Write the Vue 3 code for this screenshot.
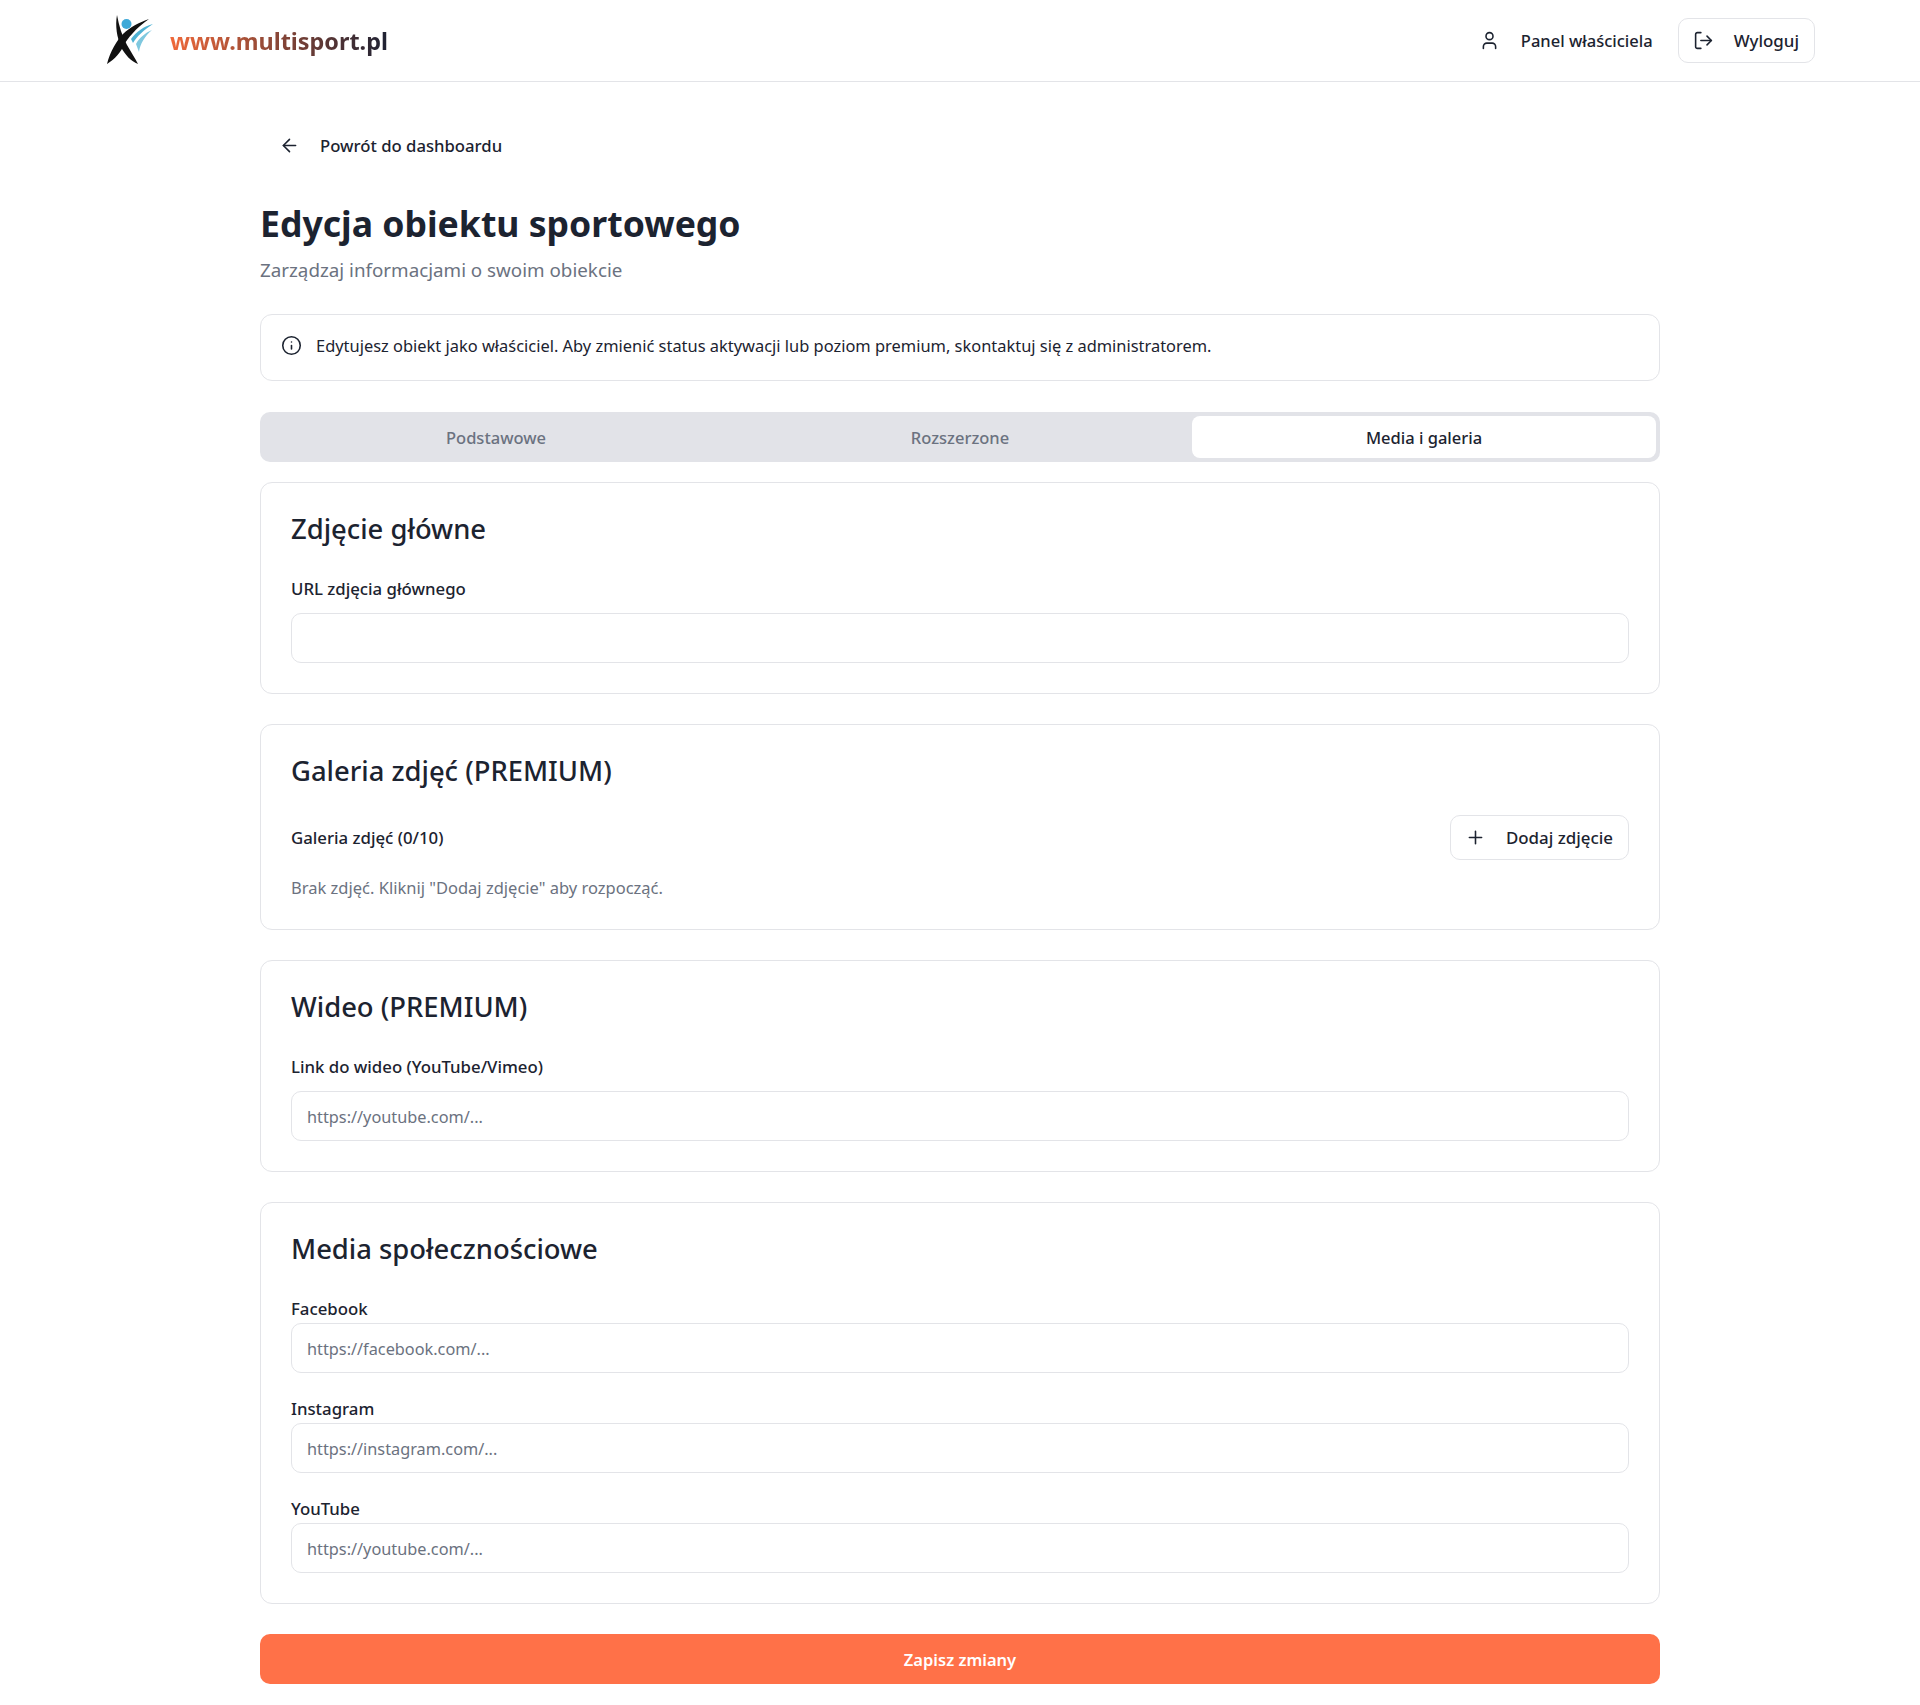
<script setup>
const tabs = [
  { name: 'Podstawowe', active: false },
  { name: 'Rozszerzone', active: false },
  { name: 'Media i galeria', active: true },
]

const socials = [
  { label: 'Facebook', placeholder: 'https://facebook.com/...' },
  { label: 'Instagram', placeholder: 'https://instagram.com/...' },
  { label: 'YouTube', placeholder: 'https://youtube.com/...' },
]
</script>

<template>
  <div class="page">
    <header class="topbar">
      <a class="brand">
        <svg class="logo" viewBox="0 0 46 50" width="46" height="50">
          <path d="M10 0 C12 11 15 21 20 30 C24 37 28 43 31 49 C24 46 18 40 14 32 C10 22 8 11 10 0 Z" fill="#111" />
          <path d="M42 4 C33 7 23 12 16 19 C10 25 3 37 0 49 C8 44 14 37 17 30 C20 24 29 13 42 4 Z" fill="#111" />
          <circle cx="19.5" cy="9" r="5" fill="#3ea9d8" />
          <path d="M46 9 C37 11 29 17 24 24 L26 28 C30 21 37 15 46 9 Z" fill="#4fb2d4" />
          <path d="M45 15 C38 18 32 23 29 29 L32 37 C33 29 38 21 45 15 Z" fill="#7fc8df" />
        </svg>
        <span class="brand-name">www.multisport.pl</span>
      </a>
      <nav class="top-actions">
        <a class="owner">
          <svg class="icon" viewBox="0 0 24 24"><path d="M19 21v-2a4 4 0 0 0-4-4H9a4 4 0 0 0-4 4v2" /><circle cx="12" cy="7" r="4" /></svg>
          Panel właściciela
        </a>
        <button class="outline-btn" type="button">
          <svg class="icon" viewBox="0 0 24 24"><path d="M9 21H5a2 2 0 0 1-2-2V5a2 2 0 0 1 2-2h4" /><path d="m16 17 5-5-5-5" /><path d="M21 12H9" /></svg>
          Wyloguj
        </button>
      </nav>
    </header>

    <main class="content">
      <a class="back">
        <svg class="icon" viewBox="0 0 24 24"><path d="m12 19-7-7 7-7" /><path d="M19 12H5" /></svg>
        Powrót do dashboardu
      </a>

      <h1>Edycja obiektu sportowego</h1>
      <p class="subtitle">Zarządzaj informacjami o swoim obiekcie</p>

      <div class="notice">
        <svg class="icon" viewBox="0 0 24 24"><circle cx="12" cy="12" r="10" /><path d="M12 16v-4" /><path d="M12 8h.01" /></svg>
        <span>Edytujesz obiekt jako właściciel. Aby zmienić status aktywacji lub poziom premium, skontaktuj się z administratorem.</span>
      </div>

      <div class="tabs">
        <button
          v-for="tab in tabs"
          :key="tab.name"
          type="button"
          :class="['tab', { active: tab.active }]"
        >
          {{ tab.name }}
        </button>
      </div>

      <section class="card">
        <h2>Zdjęcie główne</h2>
        <label class="label">URL zdjęcia głównego</label>
        <input class="field" type="text" />
      </section>

      <section class="card">
        <h2>Galeria zdjęć (PREMIUM)</h2>
        <div class="gallery-row">
          <label class="label">Galeria zdjęć (0/10)</label>
          <button class="outline-btn" type="button">
            <svg class="icon" viewBox="0 0 24 24"><path d="M5 12h14" /><path d="M12 5v14" /></svg>
            Dodaj zdjęcie
          </button>
        </div>
        <p class="hint">Brak zdjęć. Kliknij "Dodaj zdjęcie" aby rozpocząć.</p>
      </section>

      <section class="card">
        <h2>Wideo (PREMIUM)</h2>
        <label class="label">Link do wideo (YouTube/Vimeo)</label>
        <input class="field" type="text" placeholder="https://youtube.com/..." />
      </section>

      <section class="card">
        <h2>Media społecznościowe</h2>
        <div class="socials">
          <div v-for="item in socials" :key="item.label" class="social">
            <label class="label">{{ item.label }}</label>
            <input class="field" type="text" :placeholder="item.placeholder" />
          </div>
        </div>
      </section>

      <button class="save" type="button">Zapisz zmiany</button>
    </main>
  </div>
</template>

<style scoped>
.page {
  min-height: 1705px;
  background: #fff;
  color: #1c2330;
  font-family: "Noto Sans", "Open Sans", sans-serif;
  font-size: 16.5px;
}

.topbar {
  display: flex;
  align-items: center;
  justify-content: space-between;
  height: 81px;
  padding: 0 105px 0 107px;
  border-bottom: 1px solid #e3e4e8;
}

.brand {
  display: flex;
  align-items: center;
  gap: 17px;
}

.logo {
  display: block;
  margin-top: -2px;
}

.brand-name {
  font-size: 23.4px;
  font-weight: 700;
  background: linear-gradient(90deg, #f0693a, #1e2233);
  -webkit-background-clip: text;
  background-clip: text;
  color: transparent;
}

.top-actions {
  display: flex;
  align-items: center;
  gap: 8px;
}

.owner {
  display: flex;
  align-items: center;
  gap: 21px;
  padding: 0 17px;
  font-weight: 500;
}

.icon {
  width: 21px;
  height: 21px;
  flex: none;
  fill: none;
  stroke: currentColor;
  stroke-width: 1.8;
  stroke-linecap: round;
  stroke-linejoin: round;
}

.outline-btn {
  display: flex;
  align-items: center;
  gap: 20px;
  height: 45px;
  padding: 0 15px 0 14px;
  background: #fff;
  border: 1px solid #e3e4e8;
  border-radius: 10px;
  color: inherit;
  font: inherit;
  font-size: 16.9px;
  font-weight: 500;
}

.content {
  width: 1400px;
  margin: 0 auto;
  padding-top: 41px;
}

.back {
  display: flex;
  align-items: center;
  gap: 20px;
  height: 45px;
  padding-left: 19px;
  font-size: 16.7px;
  font-weight: 500;
}

h1 {
  margin: 31px 0 0;
  font-size: 35.6px;
  line-height: 48px;
  font-weight: 700;
  color: #1c2330;
}

.subtitle {
  margin: 10px 0 0;
  font-size: 18.8px;
  line-height: 26px;
  color: #6b7280;
}

.notice {
  display: flex;
  align-items: center;
  gap: 14px;
  height: 67px;
  margin-top: 31px;
  padding: 0 20px 5px;
  box-sizing: border-box;
  border: 1px solid #e3e4e8;
  border-radius: 12px;
  font-size: 16.43px;
}

.tabs {
  display: grid;
  grid-template-columns: repeat(3, 1fr);
  height: 50px;
  margin-top: 31px;
  padding: 4px;
  box-sizing: border-box;
  background: #e2e3e8;
  border-radius: 10px;
}

.tab {
  border: 0;
  border-radius: 8px;
  background: transparent;
  color: #6b7280;
  font: inherit;
  font-weight: 500;
}

.tab.active {
  background: #fff;
  color: #1c2330;
}

.card {
  margin-top: 30px;
  padding: 29px 30px 30px;
  border: 1px solid #e3e4e8;
  border-radius: 12px;
}

.tabs + .card {
  margin-top: 20px;
}

h2 {
  margin: 0 0 28px;
  font-size: 27.4px;
  line-height: 34px;
  font-weight: 500;
  color: #1c2330;
}

.label {
  display: block;
  font-size: 16.8px;
  font-weight: 500;
  line-height: 20px;
}

.card > .label,
.socials {
  margin-top: 33px;
}

.field {
  display: block;
  width: 100%;
  height: 50px;
  margin-top: 14px;
  padding: 2px 15px 0;
  box-sizing: border-box;
  border: 1px solid #e3e4e8;
  border-radius: 10px;
  color: inherit;
  font: inherit;
  font-size: 16.3px;
  outline: none;
}

.field::placeholder {
  color: #6b7280;
  opacity: 1;
}

.gallery-row {
  display: flex;
  align-items: center;
  justify-content: space-between;
  margin-top: -1px;
}

.hint {
  margin: 16px 0 0;
  line-height: 24px;
  color: #6b7280;
}

.card:nth-of-type(2) {
  padding-bottom: 29px;
}

.socials {
  display: flex;
  flex-direction: column;
  gap: 26px;
}

.social .field {
  margin-top: 4px;
}

.save {
  display: block;
  width: 100%;
  height: 50px;
  margin-top: 30px;
  border: 0;
  border-radius: 10px;
  background: #ff7148;
  color: #fff;
  font: inherit;
  font-weight: 600;
}
</style>
